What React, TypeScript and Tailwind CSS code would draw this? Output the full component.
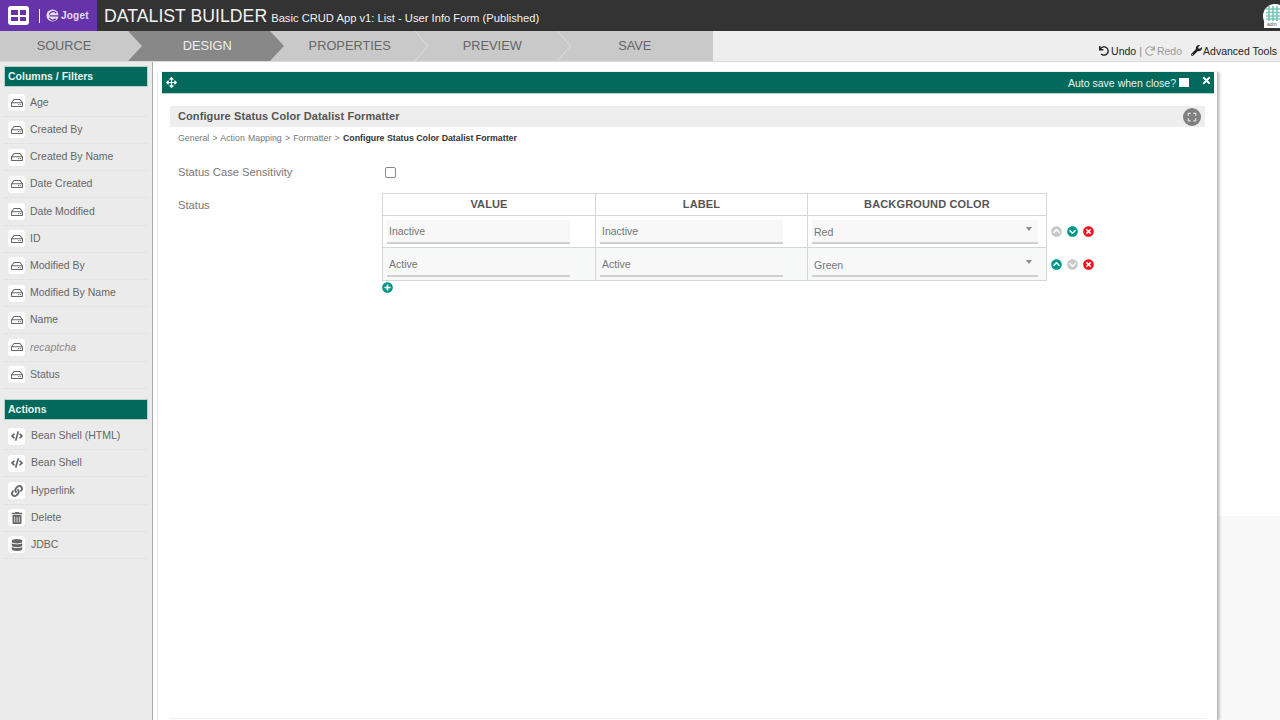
import { FaArrowsAlt, FaChevronCircleDown, FaChevronCircleUp, FaCode, FaDatabase, FaExpand, FaLink, FaPlusCircle, FaRedo, FaRegHdd, FaTimes, FaTimesCircle, FaTrashAlt, FaUndo, FaWrench } from 'react-icons/fa'
import type { ReactNode } from 'react'

const columns = ['Age', 'Created By', 'Created By Name', 'Date Created', 'Date Modified', 'ID', 'Modified By', 'Modified By Name', 'Name', 'recaptcha', 'Status']

const actions = [
  { label: 'Bean Shell (HTML)', icon: <FaCode /> },
  { label: 'Bean Shell', icon: <FaCode /> },
  { label: 'Hyperlink', icon: <FaLink /> },
  { label: 'Delete', icon: <FaTrashAlt /> },
  { label: 'JDBC', icon: <FaDatabase /> },
]

const tabs = ['SOURCE', 'DESIGN', 'PROPERTIES', 'PREVIEW', 'SAVE']

const rows = [
  { value: 'Inactive', color: 'Red', up: false, down: true, bg: 'bg-white', height: 'h-[32px]', top: 'mt-[3.5px]' },
  { value: 'Active', color: 'Green', up: true, down: false, bg: 'bg-[#f7f8f8]', height: 'h-[33px]', top: 'mt-[4.5px]' },
]

function SideHeading({ children }: { children: ReactNode }) {
  return (
    <div className="h-[21px] bg-[#00695c] border border-[#b5cfc9] pl-[3px] text-[10.5px] font-bold leading-[19px] text-[#e8f3f0]">
      {children}
    </div>
  )
}

function SideItem({ label, icon, italic, wide }: { label: string; icon: ReactNode; italic?: boolean; wide?: boolean }) {
  return (
    <div className="flex h-[27.2px] items-center border-b border-dotted border-[#dcdcdc]">
      <span className="ml-[4px] flex h-[17px] w-[17px] items-center justify-center rounded-[3px] bg-white text-[12px] text-[#666]">
        {icon}
      </span>
      <span className={'text-[10.5px] text-[#666] ' + (wide ? 'ml-[6px] ' : 'ml-[5px] ') + (italic ? 'italic text-[#888]' : '')}>{label}</span>
    </div>
  )
}

function Cell({ children, className }: { children: ReactNode; className: string }) {
  return <td className={'border border-[#d6d6d6] p-0 align-top ' + className}>{children}</td>
}

function Field({ text, width, top, select }: { text: string; width: string; top: string; select?: boolean }) {
  return (
    <div className={'relative ml-[4px] h-[24px] border-b-2 border-[#d0d0d0] bg-[#f8f8f8] pl-[2px] text-[10.5px] text-[#757575] ' + (select ? 'leading-[24px] ' : 'leading-[23px] ') + top + ' ' + width}>
      {text}
      {select && <span className="absolute right-[6px] top-[7px] h-0 w-0 border-x-[3px] border-t-[4px] border-x-transparent border-t-[#888]" />}
    </div>
  )
}

export default function App() {
  return (
    <div className="flex h-[720px] w-[1280px] flex-col overflow-hidden bg-white font-['Liberation_Sans',Arial,sans-serif]">
      <header className="flex h-[31px] shrink-0 items-center overflow-hidden bg-[#333333]">
        <div className="flex h-full w-[97px] shrink-0 items-center bg-[#6633aa] pl-[8px]">
          <span className="grid h-[19px] w-[21px] grid-cols-2 gap-x-[2px] gap-y-[2px] rounded-[3px] bg-white px-[3px] py-[4px]">
            <span className="bg-[#6633aa]" />
            <span className="bg-[#6633aa]" />
            <span className="bg-[#6633aa]" />
            <span className="bg-[#6633aa]" />
          </span>
          <span className="ml-[10px] h-[14px] w-px bg-white" />
          <svg viewBox="0 0 14 14" className="ml-[6px] h-[13px] w-[13px]">
            <circle cx="7" cy="7" r="6.5" fill="#e6def2" />
            <path d="M4 7.5h10M11 4.5A4.2 4.2 0 0 0 3.5 6M3.5 9.5a4.2 4.2 0 0 0 7 1" stroke="#6633aa" strokeWidth="1.3" fill="none" />
          </svg>
          <span className="ml-[2px] text-[10px] font-bold tracking-[0.2px] text-[#e6def2]">Joget</span>
        </div>
        <span className="ml-[7px] mt-[2px] text-[17.7px] leading-none text-[#f2f2f2]">DATALIST BUILDER</span>
        <span className="ml-[4px] mt-[5px] text-[11.2px] text-[#f2f2f2]">Basic CRUD App v1: List - User Info Form (Published)</span>
        <svg viewBox="0 0 24 24" className="ml-auto mr-[-7px] h-[24px] w-[24px] shrink-0">
          <circle cx="12" cy="12" r="12" fill="#ffffff" />
          <path d="M3 5h18M3 8.5h18M3 12h18M3 15h18M6 2v15M10 2v15M14 2v15M18 2v15" stroke="#7cc7b8" strokeWidth="1.7" />
          <rect x="1" y="17" width="22" height="7" fill="#ffffff" />
          <text x="4" y="21.5" fontSize="5" fill="#555555">adm</text>
        </svg>
      </header>

      <nav className="flex h-[31px] shrink-0 border-b border-[#dcdcdc] bg-[#eeeeee]">
        <div className="flex h-[30px] w-[713px] bg-[#c9c9c9]">
          {tabs.map((tab, i) => (
            <div
              key={tab}
              className={
                'flex h-full items-center justify-center text-[12.8px] ' +
                (i === 0 ? 'w-[128px] ' : 'w-[142.5px] pl-[16px] ') +
                (tab === 'DESIGN' ? 'relative text-[#eeeeee]' : 'relative text-[#666]')
              }
            >
              {tab === 'DESIGN' && (
                <span className="absolute left-0 top-0 h-full w-[156px] bg-[#888888] [clip-path:polygon(0_0,142px_0,100%_50%,142px_100%,0_100%,14px_50%)]" />
              )}
              {(tab === 'PROPERTIES' || tab === 'PREVIEW') && (
                <span className="absolute left-[144px] top-0 z-10 h-full w-[14px] bg-[#dedede] [clip-path:polygon(0_0,1px_0,100%_50%,1px_100%,0_100%,13px_50%)]" />
              )}
              <span className="relative">{tab}</span>
            </div>
          ))}
        </div>
        <div className="ml-auto flex items-end pb-[3px] pr-[3px] text-[10.5px] leading-[14px] text-[#222]">
          <FaUndo className="mb-[2px] mr-[2px] text-[10px]" />
          <span>Undo</span>
          <span className="mx-[3px] text-[#888]">|</span>
          <FaRedo className="mb-[2px] mr-[2px] text-[10px] text-[#aaa]" />
          <span className="text-[#999]">Redo</span>
          <FaWrench className="mb-[2px] ml-[9px] mr-[1px] text-[11px]" />
          <span>Advanced Tools</span>
        </div>
      </nav>

      <div className="flex min-h-0 flex-1">
        <aside className="w-[153px] shrink-0 border-r border-[#aaaaaa] bg-[#ebebeb] px-[4px] pt-[4px]">
          <div className="w-[144px]">
            <SideHeading>Columns / Filters</SideHeading>
            <div className="mb-[10.3px] pt-[2.7px]">
              {columns.map((c) => (
                <SideItem key={c} label={c} icon={<FaRegHdd />} italic={c === 'recaptcha'} />
              ))}
            </div>
            <SideHeading>Actions</SideHeading>
            <div className="pt-[3px]">
              {actions.map((a) => (
                <SideItem key={a.label} label={a.label} icon={a.icon} wide />
              ))}
            </div>
          </div>
        </aside>

        <main className="relative ml-[4px] mt-[10px] flex w-[1061px] shrink-0 flex-col border-r border-l border-r-[#bbbbbb] border-l-[#e6e6e6] px-[4px] shadow-[2px_0_2px_rgba(0,0,0,0.2)]">
          <div className="flex h-[22px] w-[1052px] items-center justify-between border-b border-[#b5cfc9] bg-[#00695c] pl-[4px] pr-[2px] text-white">
            <FaArrowsAlt className="text-[11px]" />
            <div className="flex items-center text-[10.5px] text-[#e8f3f0]">
              <span className="mt-[2px]">Auto save when close?</span>
              <span className="ml-[3px] mr-[12px] h-[9px] w-[10px] bg-white" />
              <FaTimes className="mb-[5px] text-[11px] text-white" />
            </div>
          </div>

          <div className="mx-[8px] mt-[12px] flex h-[21px] w-[1035px] items-center justify-between bg-[#eeeeee] pl-[8px] pr-[4px]">
            <span className="text-[11px] font-bold tracking-[0.1px] text-[#555]">Configure Status Color Datalist Formatter</span>
            <span className="flex h-[18px] w-[18px] items-center justify-center rounded-full bg-[#808080] text-[10px] text-[#dddddd]">
              <FaExpand />
            </span>
          </div>

          <div className="ml-[16px] mt-[5px] text-[8.8px] text-[#777]">
            <span className="[word-spacing:0.75px]">General &gt; Action Mapping &gt; Formatter &gt; </span>
            <span className="font-bold text-[#333]">Configure Status Color Datalist Formatter</span>
          </div>

          <div className="ml-[16px] mt-[20px] flex h-[14px] items-center text-[11.2px] text-[#777]">
            <span className="w-[207px]">Status Case Sensitivity</span>
            <span className="h-[11px] w-[11px] rounded-[2px] border border-[#888] bg-white" />
          </div>

          <div className="ml-[16px] mt-[14px] flex flex-1 flex-col">
            <div className="flex items-start text-[11.2px] text-[#777]">
              <span className="mt-[4px] w-[204px]">Status</span>
              <table className="w-[665px] table-fixed border-collapse">
                <thead>
                  <tr className="h-[22px] text-[11px] font-bold tracking-[0.15px] text-[#555]">
                    <th className="w-[213px] border border-[#d6d6d6]">VALUE</th>
                    <th className="w-[212px] border border-[#d6d6d6]">LABEL</th>
                    <th className="border border-[#d6d6d6]">BACKGROUND COLOR</th>
                  </tr>
                </thead>
                <tbody>
                  {rows.map((r) => (
                    <tr key={r.value} className={r.bg}>
                      <Cell className={r.height}>
                        <Field text={r.value} width="w-[183px]" top={r.top} />
                      </Cell>
                      <Cell className={r.height}>
                        <Field text={r.value} width="w-[183px]" top={r.top} />
                      </Cell>
                      <Cell className={r.height}>
                        <Field text={r.color} width="w-[226px]" top={r.top} select />
                      </Cell>
                    </tr>
                  ))}
                </tbody>
              </table>
              <div className="ml-[4px] mt-[33px] flex flex-col gap-[22px] text-[11px]">
                {rows.map((r) => (
                  <div key={r.value} className="flex gap-[5px]">
                    <FaChevronCircleUp className={r.up ? 'text-[#009688]' : 'text-[#c8c8c8]'} />
                    <FaChevronCircleDown className={r.down ? 'text-[#009688]' : 'text-[#c8c8c8]'} />
                    <FaTimesCircle className="text-[#f5101f]" />
                  </div>
                ))}
              </div>
            </div>
            <FaPlusCircle className="ml-[204px] mt-[1px] text-[11px] text-[#009688]" />
            <div className="mb-[1px] ml-[-8px] mt-auto h-px w-[1035px] bg-[#eeeeee]" />
          </div>
        </main>

        <div className="flex flex-1 flex-col">
          <div className="h-[454px] bg-white" />
          <div className="flex-1 bg-[#f8f8f8]" />
        </div>
      </div>
    </div>
  )
}
